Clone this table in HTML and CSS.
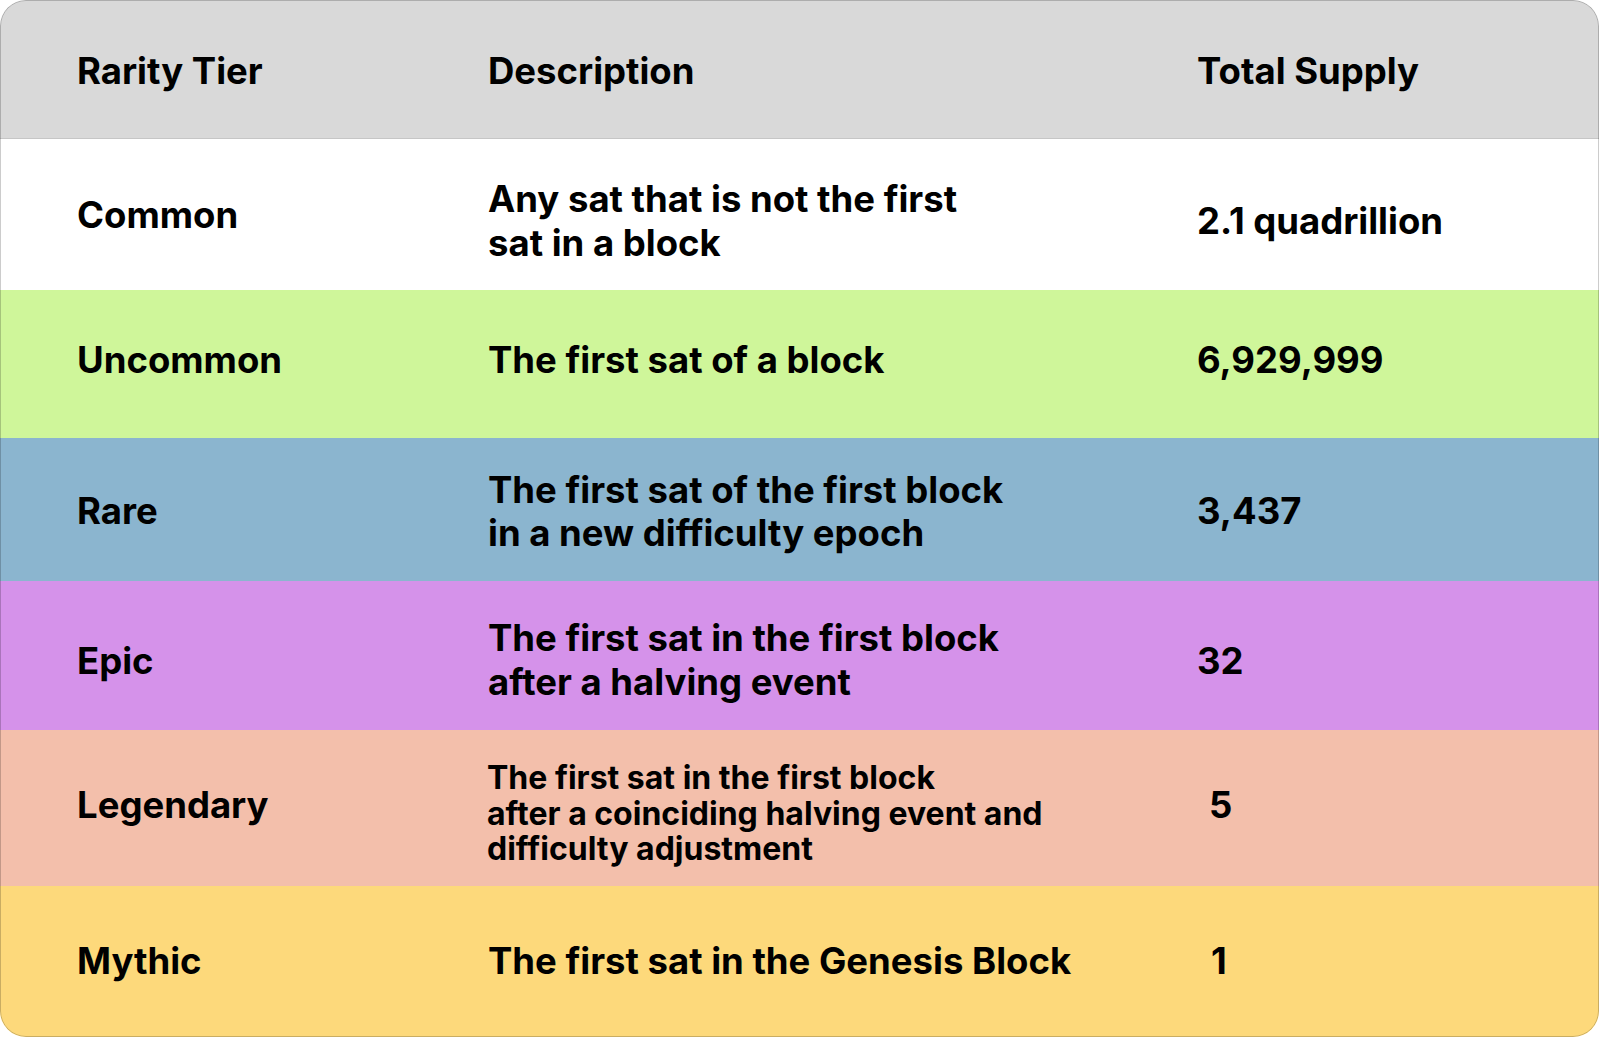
FILE: index.html
```html
<!DOCTYPE html>
<html lang="en">
<head>
<meta charset="utf-8">
<title>Sat Rarity Tiers</title>
<link rel="stylesheet" href="styles.css">
</head>
<body>
<div class="card">
  <div class="row head">
    <div class="cell">Rarity Tier</div>
    <div class="cell">Description</div>
    <div class="cell">Total Supply</div>
  </div>
  <div class="row common">
    <div class="cell">Common</div>
    <div class="cell low">Any sat that is not the first<br>sat in a block</div>
    <div class="cell low">2.1 quadrillion</div>
  </div>
  <div class="row uncommon">
    <div class="cell">Uncommon</div>
    <div class="cell">The first sat of a block</div>
    <div class="cell">6,929,999</div>
  </div>
  <div class="row rare">
    <div class="cell">Rare</div>
    <div class="cell">The first sat of the first block<br>in a new difficulty epoch</div>
    <div class="cell">3,437</div>
  </div>
  <div class="row epic">
    <div class="cell">Epic</div>
    <div class="cell">The first sat in the first block<br>after a halving event</div>
    <div class="cell">32</div>
  </div>
  <div class="row legendary">
    <div class="cell">Legendary</div>
    <div class="cell small">The first sat in the first block<br>after a coinciding halving event and<br>difficulty adjustment</div>
    <div class="cell indent">5</div>
  </div>
  <div class="row mythic">
    <div class="cell">Mythic</div>
    <div class="cell">The first sat in the Genesis Block</div>
    <div class="cell indent more">1</div>
  </div>
</div>
</body>
</html>
```

FILE: styles.css
```css
html, body {
  margin: 0;
  padding: 0;
  background: #ffffff;
}

body {
  font-family: Inter, "Noto Sans", sans-serif;
  font-weight: 700;
  color: #000000;
}

.card {
  position: relative;
  width: 1599px;
  height: 1037px;
  border-radius: 26px;
  overflow: hidden;
  display: flex;
  flex-direction: column;
}

.card::after {
  content: "";
  position: absolute;
  inset: 0;
  border: 1px solid rgba(0, 0, 0, 0.2);
  border-radius: 26px;
  pointer-events: none;
}

.row {
  display: grid;
  grid-template-columns: 411px 709px 1fr;
  align-items: center;
  box-sizing: border-box;
  font-size: 36.5px;
  line-height: 43.5px;
}

.cell {
  padding-left: 77px;
  white-space: nowrap;
}

.head {
  height: 139px;
  background: #d9d9d9;
  border-bottom: 1px solid #c6c6c6;
  padding-top: 6px;
}

.common {
  height: 151px;
  background: #ffffff;
  padding-top: 2px;
}

.common .low {
  padding-top: 12px;
}

.uncommon {
  height: 148px;
  background: #cff69a;
  padding-bottom: 6px;
}

.rare {
  height: 143px;
  background: #8bb5cf;
  padding-top: 5px;
}

.epic {
  height: 149px;
  background: #d592ea;
  padding-top: 12px;
}

.epic .cell:nth-child(2) {
  padding-bottom: 2px;
}

.legendary {
  height: 156px;
  background: #f3bfab;
  padding-bottom: 4px;
}

.legendary .small {
  font-size: 32px;
  line-height: 35.5px;
  padding-left: 76px;
  padding-top: 15px;
}

.indent {
  padding-left: 89px;
}

.indent.more {
  padding-left: 91px;
}

.mythic {
  flex: 1;
  background: #fdd97b;
}
```
